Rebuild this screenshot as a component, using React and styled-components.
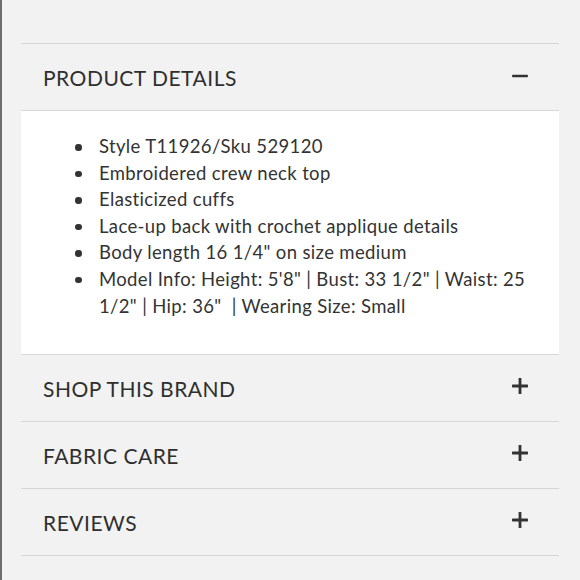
import React from "react";
import styled, { createGlobalStyle } from "styled-components";

const Global = createGlobalStyle`
  html, body { margin: 0; padding: 0; background: #f2f2f2; }
  body { font-family: Lato, "Open Sans", sans-serif; }
`;

const Page = styled.div`
  box-sizing: border-box;
  width: 580px;
  height: 580px;
  background: #f2f2f2;
  border-left: 2px solid #6e6e6e;
  padding: 43px 21px 0 19px;
`;

const Section = styled.section`
  border-top: ${(p) => (p.$first ? "1px solid #d6d6d6" : "none")};
  border-bottom: 1px solid #d6d6d6;
`;

const Header = styled.div`
  height: 66px;
  display: flex;
  align-items: center;
  justify-content: space-between;
  padding: 0 31px 0 22px;
`;

const Title = styled.h2`
  margin: 0;
  font-family: Lato, sans-serif;
  font-weight: 400;
  font-size: 21px;
  letter-spacing: 0.5px;
  color: #2f2f2f;
`;

const Icon = styled.svg`
  width: 16px;
  height: 16px;
  display: block;
  margin-top: ${(p) => p.$shift || 0}px;
`;

const Body = styled.div`
  background: #ffffff;
  border-top: 1px solid #d6d6d6;
  padding: 22px 24px 35px 78px;
`;

const List = styled.ul`
  margin: 0;
  padding: 0;
  list-style: none;
`;

const Item = styled.li`
  position: relative;
  font-family: Lato, sans-serif;
  font-size: 18.5px;
  letter-spacing: 0.35px;
  line-height: 26.6px;
  color: #333333;
  white-space: pre-wrap;
  &::before {
    content: "";
    position: absolute;
    left: -24px;
    top: 11px;
    width: 6.5px;
    height: 6.5px;
    border-radius: 50%;
    background: #333333;
  }
`;

const Minus = () => (
  <Icon viewBox="0 0 16 16" $shift={-2}>
    <rect x="0" y="6.7" width="16" height="2.6" rx="1" fill="#333" />
  </Icon>
);

const Plus = () => (
  <Icon viewBox="0 0 16 16" $shift={-4}>
    <rect x="0" y="6.6" width="16" height="2.8" rx="0.6" fill="#333" />
    <rect x="6.6" y="0" width="2.8" height="16" rx="0.6" fill="#333" />
  </Icon>
);

const items = [
  "Style T11926/Sku 529120",
  "Embroidered crew neck top",
  "Elasticized cuffs",
  "Lace-up back with crochet applique details",
  'Body length 16 1/4" on size medium',
  'Model Info: Height: 5\'8" | Bust: 33 1/2" | Waist: 25 1/2" | Hip: 36"  | Wearing Size: Small',
];

export default function App() {
  return (
    <>
      <Global />
      <Page>
        <Section $first>
          <Header>
            <Title>PRODUCT DETAILS</Title>
            <Minus />
          </Header>
          <Body>
            <List>
              {items.map((t) => (
                <Item key={t}>{t}</Item>
              ))}
            </List>
          </Body>
        </Section>
        {["SHOP THIS BRAND", "FABRIC CARE", "REVIEWS"].map((t) => (
          <Section key={t}>
            <Header>
              <Title>{t}</Title>
              <Plus />
            </Header>
          </Section>
        ))}
      </Page>
    </>
  );
}
